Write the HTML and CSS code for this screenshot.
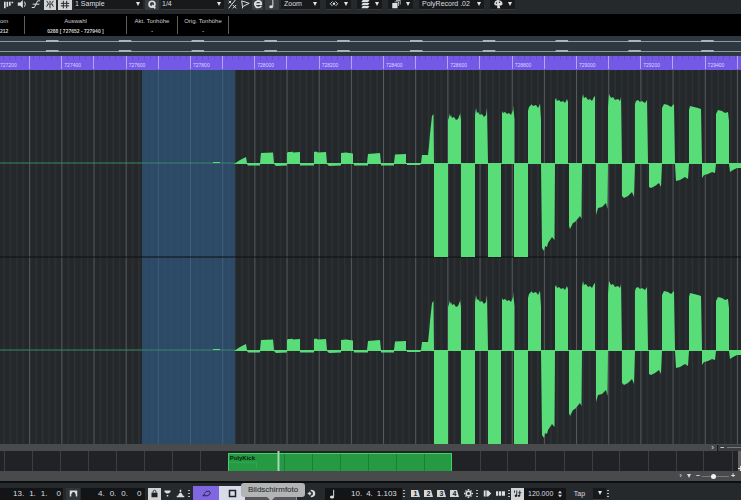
FILE: index.html
```html
<!DOCTYPE html>
<html lang="de">
<head>
<meta charset="utf-8">
<title>Sample-Editor</title>
<link rel="stylesheet" href="styles.css">
</head>
<body>
<header class="toolbar">
  <div class="tools">
    <button class="tool narrow" aria-label="Autoscroll"><svg viewBox="0 0 12 12"><path d="M1 2v8M4 2v6M7 2v5M10 2v2" class="s thick"/></svg></button>
    <button class="tool" aria-label="Vorhören"><svg viewBox="0 0 12 12"><path d="M1 3h3l3-3v10L4 7H1z" class="f"/><path d="M9 2q2 3 0 6" class="s"/></svg></button>
    <button class="tool" aria-label="Nulldurchgang"><svg viewBox="0 0 12 12"><path d="M1 9h3l4-8h3M2 5h8" class="s"/></svg></button>
    <button class="tool on" aria-label="Raster"><svg viewBox="0 0 12 12"><path d="M6 1v3M6 6v4M2 1l2 3-2 4M10 1L8 4l2 4M4 5h4" class="s"/></svg></button>
    <button class="tool on wide" aria-label="Rastertyp"><svg viewBox="0 0 12 12"><path d="M4 1v9M8 1v9M1 4h10M1 7h10" class="s"/></svg></button>
    <label class="pick sample"><select aria-label="Rastertyp"><option>1 Sample</option></select></label>
    <button class="tool lit wide" aria-label="Quantisieren"><svg viewBox="0 0 12 12"><circle cx="6" cy="5" r="3.500" class="s thick"/><path d="M6 6l4 4" class="s thick"/></svg></button>
    <label class="pick quant"><select aria-label="Quantisierung"><option>1/4</option></select></label>
    <button class="tool narrow" aria-label="Iterativ"><svg viewBox="0 0 12 12"><path d="M10 0L2 10M2 1l3 3M5 1L2 4M7 6l4 4M11 6L7 10" class="s"/></svg></button>
    <button class="tool narrow" aria-label="Swing"><svg viewBox="0 0 12 12"><path d="M2 1l9 3-8 4zM3 8v2" class="s"/></svg></button>
    <button class="tool lit narrow" aria-label="Quantisierungs-Einstellungen"><svg viewBox="0 0 12 12"><path d="M2 5h8q0-4-4-4-4 1-4 4 1 4 4 4 3 0 4-2" class="s thick"/></svg></button>
    <button class="tool lit wide" aria-label="Musikalisch"><svg viewBox="0 0 12 12"><path d="M7 0v8" class="s"/><ellipse cx="5" cy="8" rx="2.300" ry="1.800" class="f"/></svg></button>
  </div>
  <div class="menus">
    <label class="pick zoom"><select aria-label="Zoom"><option>Zoom</option></select></label>
    <button class="pick" aria-label="Ansicht"><svg viewBox="0 0 12 12"><path d="M4 2L1 5l3 3M8 2l3 3-3 3" class="s"/><circle cx="6" cy="5" r="1.600" class="f"/></svg></button>
    <button class="pick" aria-label="Spuren"><svg viewBox="0 0 12 12"><path d="M3 0h9l-2 3H1zM3 4h9l-2 3H1zM3 8h9l-2 3H1z" class="f"/></svg></button>
    <button class="pick" aria-label="Ebenen"><svg viewBox="0 0 12 12"><path d="M6 0h6v6h-1V1H6zM4 2h6v6H9V3H4zM1 4h7v7H1z" class="f"/></svg></button>
    <label class="pick record"><select aria-label="Clip"><option>PolyRecord .02</option></select></label>
    <button class="pick" aria-label="Farben"><svg viewBox="0 0 12 12"><path d="M1 5q0-4 5-5 6 1 6 5 0 3-4 2l1 4H5V7Q1 8 1 5z" class="f"/><circle cx="4" cy="4" r="1" class="hole"/><circle cx="8" cy="3" r="1" class="hole"/></svg></button>
  </div>
</header>

<section class="info">
  <div class="first"><span>om</span><b>212</b></div>
  <div class="range"><span>Auswahl</span><b>0288 [ 727652 - 727940 ]</b></div>
  <div class="pitch"><span>Akt. Tonhöhe</span><b>-</b></div>
  <div class="pitch"><span>Orig. Tonhöhe</span><b>-</b></div>
</section>

<svg class="overview" viewBox="0 0 741 20" preserveAspectRatio="none" aria-hidden="true">
  <path class="level" d="M0 5.500H741M0 15.500H741"/>
  <path class="peaks" d="M46 5H741M46 15H741"/>
</svg>

<div class="ruler"><div class="ticks">
  <span>727200</span><span>727400</span><span>727600</span><span>727800</span><span>728000</span><span>728200</span><span>728400</span><span>728600</span><span>728800</span><span>729000</span><span>729200</span><span>729400</span>
</div></div>

<main class="editor">
  <svg class="lanes" viewBox="0 0 741 374" preserveAspectRatio="none" role="img" aria-label="Wellenform">
    <defs>
      <pattern id="grid" x="-3" width="32.170" height="374" patternUnits="userSpaceOnUse">
        <path class="minor" d="M7 0V374M13.400 0V374M19.800 0V374M26.200 0V374"/>
        <path class="major" d="M.5 0V374"/>
      </pattern>
      <g id="wave">
        <path class="quiet" d="M0 93H235"/>
        <path class="signal" d="M213 93v-1h7v1z
          M234 94L240 90 246 87 247 93H260L261 83 273 82.500 274 93H287V83L288 82H291L292 81.500 293 82.500 300 82V93H314V82L316 81.500 318 82.500 326 82 327 93H341V83L346 82.500 353 83.500V93H367L368 84 380 83 381 93H394L395 84.500 406 84V93H421L422 85H428L429 76 430 64 432 46 433.500 44 434 93H448V47L449 50V43L450 47 451 45 452 48 454 47 456 50 458 49 460 44V42L461 50V93H475V45L476 38 477 43 478 42 480 45 482 44 484 47 486 45 487 38 488 93H502V41L503 43 505 42 507 44 509 43 511 45 513 40V35L514.500 49V93H528V41L529 37 531 35V34L533 36 536 35 538 38 540 34V33L541 50V93H555V30L556 28 557 31 559 30 561 32 563 31 565 33 567 29 568 32V93H582V30L583 24 584 28 586 27 588 30 590 29 592 31 594 27 595 26V93H608V37L609 24 611 28 613 27 615 30 618 29 620 31 621 27 622 93H635V34L636 31 638 30 640 32 642 31 645 33 647 30 648 93H662V38L664 34 668 35 671 37 674 34 675 93H689V40L690 36 694 37 698 38 701 39 702 93H716V44L718 40 722 41 725 43 728 42 729 51V93H741V98L737 98 733 100 730 102 729 94 716 94 715 103 712 102 708 104 704 105 702 108V94H689L688 109 685 107 680 110 676 111 675 94H662L661 117 659 113 655 116 651 118 649 117V94H635L634 127 632 122 628 126 624 128 622 126V94H608L607.500 139 606 133 602 137 598 138 596 145V94H582L581.500 149 580 146 575 152 573 153 570 159 569 156V94H555L554.500 170 552 167 548 173 547 177 545 176 544 181 542 178 541 94H528V187H514V94H501V187H488V94H475V187H461V94H448V187H434V94H421L420 95H407V94H394V95.500H381V94H368V95.500H354V94H341V95.500L329 96 327 94H314V95.500H300V94H287V95.500L276 96 274 94H260V95.500H248L247 94z"/>
      </g>
    </defs>
    <rect class="back" width="741" height="374"/>
    <rect class="gridlines" width="741" height="374"/>
    <rect class="selection" x="142" width="93" height="374"/>
    <path class="divider" d="M0 187H741"/>
    <use href="#wave"/>
    <use href="#wave" y="187"/>
  </svg>
</main>

<div class="scroll top"><span class="arrow">›</span><span class="zoomer"><i>−</i><span class="rail"></span></span></div>

<div class="strip">
  <svg class="clip" viewBox="0 0 741 20" preserveAspectRatio="none" aria-hidden="true">
    <path class="bars" d="M4.500 0V20M32.500 0V20M60.500 0V20M88.500 0V20M116.500 0V20M144.500 0V20M172.500 0V20M200.500 0V20M480.500 0V20M507.500 0V20M535.500 0V20M564.500 0V20M592.500 0V20M619.500 0V20M648.500 0V20M676.500 0V20M703.500 0V20M732.500 0V20"/>
    <rect class="event" x="228" y="2" width="224" height="18"/>
    <path class="edges" d="M284.500 2V20M312.500 2V20M340.500 2V20M368.500 2V20M396.500 2V20M424.500 2V20"/>
    <path class="inner" d="M228 11.500H256.500V17"/>
    <path class="rim" d="M228.500 2V20M451.500 2V20M228 2.500H452"/>
    <path class="cursor" d="M278.500 0V20"/>
    <rect class="edgebar" x="738" width="3" height="20"/>
    <path class="plus" d="M738 17.500H741M740.500 15V20"/>
  </svg>
  <div class="name"><span></span><b>PolyKick</b></div>
</div>

<div class="scroll bottom"><span class="arrow">›</span><span class="down"></span><i>−</i><input type="range" aria-label="Zoomfaktor" value="40"><i>+</i></div>

<footer class="transport">
  <div class="time left"><span>13.</span><span>1.</span><span>1.</span><span class="last">0</span></div>
  <button class="icon punch" aria-label="Locator"><svg viewBox="0 0 12 12"><path d="M1 2h10v8H9V7L7 4H5L3 7v3H1z" class="f"/></svg></button>
  <div class="time second"><span>4.</span><span>0.</span><span>0.</span><span class="last">0</span></div>
  <button class="icon lock" aria-label="Sperren"><svg viewBox="0 0 12 12"><path d="M2 5h8v6H2z" class="f"/><path d="M4 5V3q2-3 4 0v2" class="s"/></svg></button>
  <button class="icon" aria-label="Punch-In"><svg viewBox="0 0 12 12"><path d="M2 2h8v2L7 6H5L2 4zM5 8h2v2H5z" class="f"/></svg></button>
  <button class="icon" aria-label="Punch-Out"><svg viewBox="0 0 12 12"><path d="M5 1h2v3H5zM5 5h2l2 3v1H3V8zM1 9h10v2H1z" class="f"/></svg></button>
  <span class="dots"></span>
  <div class="play">
    <button class="cycle" aria-label="Cycle"><svg viewBox="0 0 12 12"><path d="M1 9h6q4-1 4-4t-5-2L3 6M1 9l3-2" class="s"/></svg></button>
    <button class="stop" aria-label="Stopp"><svg viewBox="0 0 12 12"><path d="M2 2h8v8H2z" class="s thick"/></svg></button>
    <button class="start" aria-label="Start"></button>
    <button class="start" aria-label="Aufnahme"></button>
    <div class="tooltip" role="tooltip">Bildschirmfoto</div>
  </div>
  <button class="icon mode" aria-label="Modus"><svg viewBox="0 0 12 12"><path d="M5 1q6 0 6 5t-6 5V9q3 0 3-3T5 3zM1 5h2V3l3 3-3 3V7H1z" class="f"/></svg></button>
  <div class="time main"><svg viewBox="0 0 12 12"><path d="M8 1v8" class="s"/><ellipse cx="6" cy="9.500" rx="2.500" ry="1.800" class="f"/></svg><span>10.</span><span>4.</span><span>1.103</span></div>
  <span class="dots"></span>
  <div class="markers"><button>1</button><button>2</button><button>3</button><button>4</button></div>
  <button class="icon" aria-label="Einstellungen"><svg viewBox="0 0 12 12"><circle cx="6" cy="6" r="3" class="s thick"/><path d="M6 0v2M6 10v2M0 6h2M10 6h2M2 2l1 1M9 9l1 1M2 10l1-1M9 3l1-1" class="s thick"/></svg></button>
  <span class="dots"></span>
  <button class="icon click" aria-label="Click"><svg viewBox="0 0 12 12"><path d="M1 2h6l4 4-4 4H1z" class="f"/><path d="M4 2v8" class="gap"/></svg></button>
  <button class="icon" aria-label="Vorzähler"><svg viewBox="0 0 12 12"><path d="M0 3h3v6H0zM4 3h3v6H4zM8 3h4v6H8z" class="f"/></svg></button>
  <span class="dots"></span>
  <button class="icon lock" aria-label="Tempospur"><svg viewBox="0 0 12 12"><path d="M5 2v7M9 2v7M2 2v3M7 5h4" class="s"/><circle cx="4" cy="9" r="1.800" class="f"/><circle cx="8" cy="9" r="1.500" class="f"/></svg></button>
  <label class="tempo"><input type="text" value="120.000" aria-label="Tempo"><svg viewBox="0 0 6 12"><path d="M3 1l3 4H0zM3 11l3-4H0z" class="f"/></svg></label>
  <button class="tap">Tap</button>
  <button class="pick drop" aria-label="Tap-Optionen"></button>
  <span class="dots"></span>
</footer>
</body>
</html>
```
FILE: styles.css
```css
* { box-sizing: border-box; }

body {
  margin: 0;
  height: 100vh;
  overflow: hidden;
  display: flex;
  flex-direction: column;
  background: #26292c;
  color: #dcdee0;
  font-family: "Liberation Sans", Arial, sans-serif;
  font-size: 7px;
}

button, select, input {
  margin: 0;
  padding: 0;
  border: 0;
  background: none;
  color: inherit;
  font: inherit;
  appearance: none;
}

svg { display: block; }
.s { fill: none; stroke: currentColor; stroke-width: 1.2; }
.thick { stroke-width: 2; }
.f { fill: currentColor; }
.hole { fill: #1b1d1f; }
.gap { stroke: #1b1d1f; }

/* Toolbar */
.toolbar {
  flex: none;
  display: flex;
  gap: 2px;
  height: 14px;
  padding-left: 3px;
  align-items: flex-start;
  background: #26292c;
}
.tools { display: flex; gap: 2px; }
.menus { display: flex; gap: 6px; }
.tool {
  flex: none;
  width: 12px;
  height: 10px;
  display: flex;
  justify-content: center;
}
.tool svg { width: 10px; height: 10px; }
.tool.narrow { width: 11px; }
.tool.wide { width: 14px; }
.tool.on { background: #d3d4d5; color: #26292c; }
.tool.lit { background: #3a3d40; }

.pick {
  display: flex;
  align-items: center;
  justify-content: space-between;
  width: 25px;
  height: 10px;
  padding: 0 3px 1px;
  background: #17191b;
  border-bottom: 1px solid #34373a;
}
.pick::after {
  content: "";
  flex: none;
  border: 2px solid transparent;
  border-top: 4px solid #e2e4e6;
  border-bottom: 0;
}
.pick svg { width: 10px; height: 9px; }
.pick select { flex: 1; min-width: 0; line-height: 8px; }
.pick.sample { width: 69px; padding-left: 1px; }
.pick.quant { width: 63px; padding-left: 1px; }
.pick.zoom { width: 39px; }
.pick.record { width: 65px; }

/* Info line */
.info {
  flex: none;
  display: flex;
  height: 22px;
  padding: 2px 0;
  background: #000;
  font-size: 6px;
  line-height: 10px;
  text-align: center;
  color: #ccced0;
}
.info div {
  display: flex;
  flex-direction: column;
  border-right: 1px solid #5c5e60;
}
.info b { font-size: 5px; }
.info .first { width: 25px; align-items: flex-start; }
.info .range { width: 102px; }
.info .pitch { width: 51px; }

/* Overview */
.overview { flex: none; width: 100%; height: 20px; background: #2e3841; }
.level { stroke: #8d9aa2; }
.peaks { stroke: #aab5bb; stroke-width: 2; stroke-dasharray: 12.500 60.300; }

/* Ruler */
.ruler { flex: none; height: 14px; overflow: hidden; background: #7359e6; }
.ticks {
  display: flex;
  height: 13px;
  margin: 0 -28px 0 -3px;
}
.ticks span {
  flex: 1;
  padding: 6px 0 0 2px;
  border-left: 1px solid #b3a7f2;
  background:
    linear-gradient(#b3a7f2, #b3a7f2) 31px 0 / 1px 100% no-repeat,
    repeating-linear-gradient(90deg, transparent 0 5px, #674fd0 5px 6px) 0 0 / 100% 4px no-repeat;
  color: #ddd6fb;
  font-size: 5px;
  line-height: 6px;
}

/* Waveform */
.editor { flex: 1; min-height: 0; display: flex; }
.lanes { width: 100%; height: 100%; }
.back { fill: #24282b; }
.gridlines { fill: url(#grid); }
.minor { stroke: #303437; }
.major { stroke: #565a5d; }
.selection { fill: #325f8d; fill-opacity: .6; }
.divider { stroke: #0e1011; }
.quiet { stroke: #338b64; }
.signal { fill: #58dd78; }

/* Scroll rows */
.scroll {
  flex: none;
  display: flex;
  align-items: center;
  justify-content: flex-end;
  background: #484a4c;
  color: #e2e3e4;
  line-height: 6px;
}
.scroll i { font-style: normal; font-weight: bold; }
.scroll.top { height: 7px; }
.scroll.bottom { height: 10px; gap: 5px; padding-right: 6px; }
.arrow { padding-right: 3px; font-size: 8px; }
.top .arrow { border-right: 1px solid #17191b; }
.bottom .arrow { padding-right: 0; }
.zoomer { display: flex; align-items: center; gap: 3px; width: 23px; padding-left: 2px; background: #3b3d3f; }
.rail { flex: 1; height: 1px; background: #77797b; }
.down { border: 2px solid transparent; border-top: 4px solid #d6d8da; border-bottom: 0; }
input[type="range"] {
  width: 27px;
  height: 5px;
  margin: 0 -3px;
  background: linear-gradient(#77797b, #77797b) 0 2px / 100% 1px no-repeat;
}
input[type="range"]::-webkit-slider-thumb {
  appearance: none;
  width: 5px;
  height: 5px;
  border-radius: 50%;
  background: #f2f2f2;
}

/* Clip strip */
.strip { flex: none; display: grid; height: 20px; background: #202226; }
.strip > * { grid-area: 1 / 1; }
.clip { width: 100%; height: 20px; }
.bars { stroke: #3c3f42; }
.event { fill: #259a43; }
.edges { stroke: #1b7e38; }
.inner { fill: none; stroke: #2fa84e; }
.rim { fill: none; stroke: #3bd565; }
.cursor { stroke: #a9d6b3; stroke-width: 2; }
.edgebar { fill: #606264; }
.plus { stroke: #e2e3e4; }
.name { display: grid; grid-template-columns: 31% 1fr; padding-top: 4px; line-height: 6px; font-size: 6px; color: #07200d; }

/* Transport */
.transport {
  flex: none;
  display: flex;
  align-items: center;
  height: 19px;
  padding-top: 4px;
  border-top: 2px solid #0d0e0f;
  background: #26292c;
}
.time {
  flex: none;
  display: flex;
  align-items: center;
  height: 12px;
  gap: 5px;
  background: #121416;
  font-size: 8px;
}
.time .last { margin-left: 4px; }
.time.left { width: 63px; padding-left: 13px; }
.time.second { width: 64px; padding-left: 17px; margin-right: 3px; }
.time.main { width: 77px; padding-left: 2px; gap: 4px; }
.time svg { width: 10px; height: 10px; margin-right: 10px; }
.icon {
  flex: none;
  display: flex;
  align-items: center;
  justify-content: center;
  width: 13px;
  height: 12px;
}
.icon svg { width: 9px; height: 9px; }
.icon.punch { width: 14px; margin: 0 1px 0 3px; background: #323538; }
.icon.lock { background: #d3d4d5; color: #202326; }
.icon.mode { width: 16px; margin: 0 6px; }
.icon.click { margin-left: 2px; }
.dots {
  flex: none;
  width: 2px;
  height: 8px;
  margin: 0 1px;
  background: repeating-linear-gradient(#b6b8ba 0 1px, transparent 1px 3px);
}
.play { position: relative; display: flex; height: 15px; margin-left: 2px; }
.play button { display: flex; align-items: center; justify-content: center; width: 26px; }
.play svg { width: 9px; height: 9px; }
.play .cycle { background: #8067e0; color: #211c3b; }
.play .stop { background: #d9dce8; color: #202326; }
.play .start { background: #55575b; border-right: 1px solid #8d8f92; }
.tooltip {
  position: absolute;
  left: 48px;
  top: -3px;
  padding: 2px 7px 3px;
  border-radius: 3px;
  background: #b3b4b5;
  color: #222;
  font-size: 8px;
  line-height: 9px;
}
.tooltip::after {
  content: "";
  position: absolute;
  left: 26px;
  top: 100%;
  border: 4px solid transparent;
  border-top-color: #b3b4b5;
}
.markers { display: flex; gap: 4px; margin: 0 3px 0 5px; }
.markers button {
  width: 9px;
  height: 7px;
  background: #d6d8da;
  clip-path: polygon(0 0, 78% 0, 100% 100%, 0 100%);
  color: #202326;
  font-weight: bold;
  line-height: 7px;
}
.tempo {
  display: flex;
  align-items: center;
  width: 42px;
  height: 12px;
  padding: 0 4px;
  background: #121416;
}
.tempo input { flex: 1; min-width: 0; }
.tempo svg { width: 4px; height: 8px; }
.tap { width: 27px; height: 12px; }
.pick.drop { width: 13px; height: 12px; justify-content: center; }
```
